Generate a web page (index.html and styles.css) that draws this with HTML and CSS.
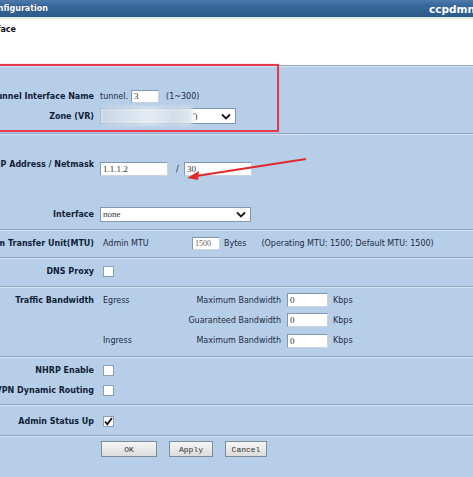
FILE: index.html
```html
<!DOCTYPE html>
<html>
<head>
<meta charset="utf-8">
<link rel="stylesheet" href="styles.css">
</head>
<body>
<div class="page">
  <div class="topbar">
    <div class="title"><span>Configuration</span></div>
    <div class="brand">ccpdmn</div>
  </div>
  <div class="subhead">
    <div class="subtitle"><span>Tunnel Interface</span></div>
  </div>
  <div class="form">
    <section class="sec s1">
      <div class="row">
        <div class="lbl"><span>Tunnel Interface Name</span></div>
        <div class="val"><span class="txt">tunnel.</span><span class="inp w28 m3">3</span><span class="txt m7">(1~300)</span></div>
      </div>
      <div class="row">
        <div class="lbl"><span>Zone (VR)</span></div>
        <div class="val"><div class="sel zone"><span class="seltxt">')</span><svg class="chev" width="10" height="7" viewBox="0 0 10 7"><path d="M1 1.5 L5 5.5 L9 1.5" fill="none" stroke="#1a1a1a" stroke-width="1.8"/></svg></div></div>
      </div>
    </section>

    <section class="sec s2">
      <div class="row top">
        <div class="lbl lblTop"><span>IP Address / Netmask</span></div>
        <div class="val valTop"><span class="inp w68 h14">1.1.1.2</span><span class="txt slash">/</span><span class="inp w68 h14">30</span></div>
      </div>
      <div class="row r-if">
        <div class="lbl"><span>Interface</span></div>
        <div class="val"><div class="sel iface"><span class="seltxt">none</span><svg class="chev" width="10" height="7" viewBox="0 0 10 7"><path d="M1 1.5 L5 5.5 L9 1.5" fill="none" stroke="#1a1a1a" stroke-width="1.8"/></svg></div></div>
      </div>
    </section>

    <section class="sec s3">
      <div class="row">
        <div class="lbl"><span>Maximum Transfer Unit(MTU)</span></div>
        <div class="val"><span class="txt mtu">Admin MTU</span><span class="inp w28 light">1500</span><span class="txt m4">Bytes</span><span class="txt oper">(Operating MTU: 1500; Default MTU: 1500)</span></div>
      </div>
    </section>

    <section class="sec s4">
      <div class="row">
        <div class="lbl"><span>DNS Proxy</span></div>
        <div class="val"><span class="cb"></span></div>
      </div>
    </section>

    <section class="sec s5">
      <div class="traffic">
        <div class="lbl tl"><span>Traffic Bandwidth</span></div>
        <div class="bw">
          <span class="txt dir">Egress</span><span class="txt bwl">Maximum Bandwidth</span><span class="inp w41 h14">0</span><span class="txt kb">Kbps</span>
          <span class="txt dir"></span><span class="txt bwl">Guaranteed Bandwidth</span><span class="inp w41 h14">0</span><span class="txt kb">Kbps</span>
          <span class="txt dir">Ingress</span><span class="txt bwl">Maximum Bandwidth</span><span class="inp w41 h14">0</span><span class="txt kb">Kbps</span>
        </div>
      </div>
    </section>

    <section class="sec s6">
      <div class="row">
        <div class="lbl"><span>NHRP Enable</span></div>
        <div class="val"><span class="cb"></span></div>
      </div>
      <div class="row r21">
        <div class="lbl"><span>VPN Dynamic Routing</span></div>
        <div class="val"><span class="cb"></span></div>
      </div>
    </section>

    <section class="sec s7">
      <div class="row">
        <div class="lbl"><span>Admin Status Up</span></div>
        <div class="val"><span class="cb"><svg width="9" height="9" viewBox="0 0 9 9"><path d="M1 4.5 L3.3 7.2 L8 1" fill="none" stroke="#111" stroke-width="1.8"/></svg></span></div>
      </div>
    </section>

    <section class="sec s8">
      <div class="buttons">
        <span class="btn b-ok">OK</span>
        <span class="btn b-apply">Apply</span>
        <span class="btn b-cancel">Cancel</span>
      </div>
    </section>
  </div>

  <div class="redbox"></div>
  <div class="blur"></div>
  <svg class="arrow" width="473" height="477" viewBox="0 0 473 477">
    <line x1="306" y1="159" x2="196" y2="176" stroke="#e02a2a" stroke-width="2"/>
    <polygon points="187,178 199,171 198,180" fill="#e02a2a"/>
  </svg>
</div>
</body>
</html>
```

FILE: styles.css
```css
html, body {
  margin: 0;
  padding: 0;
  overflow: hidden;
}
body {
  width: 473px;
  height: 477px;
  font-family: "DejaVu Sans", Verdana, sans-serif;
  font-size: 8px;
  color: #142238;
}
.page {
  position: relative;
  width: 473px;
  height: 477px;
  overflow: hidden;
  background: #b7cee8;
}
.topbar {
  height: 17px;
  display: flex;
  align-items: center;
  justify-content: space-between;
  background: linear-gradient(#4d7bab 0%, #36679a 35%, #2c5b8b 100%);
  color: #fff;
  font-weight: bold;
}
.title {
  width: 48px;
  display: flex;
  justify-content: flex-end;
  white-space: nowrap;
  font-size: 8px;
  text-shadow: 0 0 1px #1a3a5a;
}
.brand {
  font-size: 10.5px;
  margin-right: -2px;
  white-space: nowrap;
}
.subhead {
  height: 46px;
  background: #fff;
  border-top: 2px solid #e4ece0;
}
.subtitle {
  width: 16px;
  display: flex;
  justify-content: flex-end;
  white-space: nowrap;
  font-weight: bold;
  color: #111;
  padding-top: 6px;
}
.sec {
  box-sizing: border-box;
  border-top: 1px solid #8ea7c3;
  box-shadow: inset 0 1px 0 #d6e3f2;
}
.s1 { height: 68px; padding-top: 20px; }
.s2 { height: 96px; padding-top: 24px; }
.s3 { height: 28px; padding-top: 3px; }
.s4 { height: 29px; padding-top: 3px; }
.s5 { height: 70px; padding-top: 3px; }
.s6 { height: 48px; padding-top: 3px; }
.s7 { height: 31px; padding-top: 6px; }
.s8 { height: 42px; padding-top: 5px; }

.row {
  display: grid;
  grid-template-columns: 94px 1fr;
  column-gap: 6px;
  height: 20px;
  align-items: center;
}
.row.r21 { height: 21px; }
.row.top { align-items: start; }
.row.r-if { margin-top: 26px; }
.lbl {
  display: flex;
  justify-content: flex-end;
  white-space: nowrap;
  font-weight: bold;
  color: #0f1d36;
}
.lblTop { padding-top: 2px; }
.val {
  display: flex;
  align-items: center;
  white-space: nowrap;
}
.valTop { padding-top: 4px; }
.txt { color: #1c2a42; white-space: nowrap; }
.m3 { margin-left: 3px; }
.m4 { margin-left: 4px; }
.m7 { margin-left: 7px; }
.slash { margin: 0 5px 0 8px; width: 3px; }
.mtu { margin-left: 3px; width: 89px; }
.oper { margin-left: 15px; }

.inp {
  display: inline-flex;
  align-items: center;
  box-sizing: border-box;
  height: 13px;
  padding-left: 2px;
  background: #fff;
  border: 1px solid #7f97b2;
  border-right-color: #c8d4e2;
  border-bottom-color: #c8d4e2;
  font-family: "Liberation Serif", serif;
  font-size: 9px;
  color: #333;
}
.inp.h14 { height: 14px; }
.inp.light { color: #666; font-size: 8px; }
.w28 { width: 28px; }
.w41 { width: 41px; }
.w68 { width: 68px; }

.sel {
  display: flex;
  align-items: center;
  justify-content: space-between;
  box-sizing: border-box;
  background: #fff;
  border: 1px solid #8298b0;
  font-family: "Liberation Serif", serif;
  font-size: 9px;
  color: #333;
  padding: 0 4px 0 2px;
}
.zone { width: 136px; height: 16px; padding-left: 92px; }
.iface { width: 151px; height: 15px; }
.chev { display: block; }

.cb {
  display: inline-flex;
  align-items: center;
  justify-content: center;
  box-sizing: border-box;
  width: 11px;
  height: 11px;
  margin-left: 3px;
  background: #fff;
  border: 1px solid #8aa0b8;
}

.traffic {
  display: grid;
  grid-template-columns: 94px 1fr;
  column-gap: 6px;
  align-items: start;
}
.tl { height: 20px; align-items: center; }
.bw {
  display: grid;
  grid-template-columns: 83px 101px 41px auto;
  grid-template-rows: 20px 20px 21px;
  align-items: center;
}
.dir { padding-left: 3px; }
.bwl { text-align: right; padding-right: 3px; }
.bw .inp { margin-left: 3px; }
.kb { margin-left: 8px; }

.buttons {
  display: flex;
  padding-left: 101px;
  gap: 12px;
}
.btn {
  display: inline-flex;
  align-items: center;
  justify-content: center;
  box-sizing: border-box;
  height: 16px;
  background: linear-gradient(#f6f6f6, #dcdcdc);
  border: 1px solid #7d8a98;
  font-family: "Liberation Mono", monospace;
  font-size: 8px;
  color: #333;
}
.b-ok { width: 56px; }
.b-apply { width: 44px; }
.b-cancel { width: 42px; }

.redbox {
  position: absolute;
  left: -10px;
  top: 64px;
  width: 289px;
  height: 68px;
  box-sizing: border-box;
  border: 2px solid #e03a4c;
  box-shadow: 0 0 1px #f08090;
}
.blur {
  position: absolute;
  left: 100px;
  top: 107px;
  width: 92px;
  height: 18px;
  background: linear-gradient(90deg, #c4d4e6 0%, #d8e2ee 30%, #e6ecf3 55%, #d2dce8 80%, #dfe6ee 100%);
  filter: blur(2px);
}
.arrow {
  position: absolute;
  left: 0;
  top: 0;
  pointer-events: none;
}
```
